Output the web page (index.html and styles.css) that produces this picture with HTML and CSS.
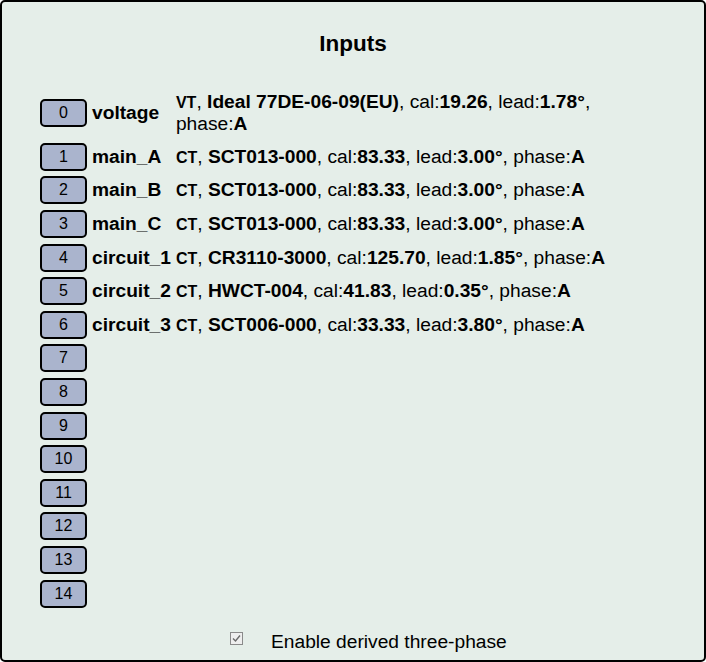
FILE: index.html
```html
<!DOCTYPE html>
<html>
<head>
<meta charset="utf-8">
<link rel="stylesheet" href="styles.css">
</head>
<body>
<div class="panel">
  <div class="title">Inputs</div>
  <div class="inputs">
    <button class="chan">0</button><div class="name">voltage</div><div class="info"><span class="kind">VT</span>, <b>Ideal 77DE-06-09(EU)</b>, cal:<b>19.26</b>, lead:<b>1.78°</b>, phase:<b>A</b></div>
    <button class="chan">1</button><div class="name">main_A</div><div class="info"><span class="kind">CT</span>, <b>SCT013-000</b>, cal:<b>83.33</b>, lead:<b>3.00°</b>, phase:<b>A</b></div>
    <button class="chan">2</button><div class="name">main_B</div><div class="info"><span class="kind">CT</span>, <b>SCT013-000</b>, cal:<b>83.33</b>, lead:<b>3.00°</b>, phase:<b>A</b></div>
    <button class="chan">3</button><div class="name">main_C</div><div class="info"><span class="kind">CT</span>, <b>SCT013-000</b>, cal:<b>83.33</b>, lead:<b>3.00°</b>, phase:<b>A</b></div>
    <button class="chan">4</button><div class="name">circuit_1</div><div class="info"><span class="kind">CT</span>, <b>CR3110-3000</b>, cal:<b>125.70</b>, lead:<b>1.85°</b>, phase:<b>A</b></div>
    <button class="chan">5</button><div class="name">circuit_2</div><div class="info"><span class="kind">CT</span>, <b>HWCT-004</b>, cal:<b>41.83</b>, lead:<b>0.35°</b>, phase:<b>A</b></div>
    <button class="chan">6</button><div class="name">circuit_3</div><div class="info"><span class="kind">CT</span>, <b>SCT006-000</b>, cal:<b>33.33</b>, lead:<b>3.80°</b>, phase:<b>A</b></div>
    <button class="chan">7</button><div class="name"></div><div class="info"></div>
    <button class="chan">8</button><div class="name"></div><div class="info"></div>
    <button class="chan">9</button><div class="name"></div><div class="info"></div>
    <button class="chan">10</button><div class="name"></div><div class="info"></div>
    <button class="chan">11</button><div class="name"></div><div class="info"></div>
    <button class="chan">12</button><div class="name"></div><div class="info"></div>
    <button class="chan">13</button><div class="name"></div><div class="info"></div>
    <button class="chan">14</button><div class="name"></div><div class="info"></div>
  </div>
  <label class="derived"><span class="box"><svg width="13" height="13" viewBox="0 0 13 13"><rect x="0.5" y="0.5" width="12" height="12" fill="#eeeeee" stroke="#8a8a8a"/><path d="M3 6.5 L5.5 9 L10 3.5" fill="none" stroke="#6a6a6a" stroke-width="1.4"/></svg></span><span>Enable derived three-phase</span></label>
</div>
</body>
</html>
```
FILE: styles.css
```css
html, body {
  margin: 0;
  padding: 0;
  background: #ffffff;
}
body {
  font-family: "Liberation Sans", Arial, sans-serif;
  font-size: 19.2px;
  color: #000;
}
.panel {
  box-sizing: border-box;
  width: 706px;
  height: 662px;
  border: 2px solid #000;
  border-radius: 5px;
  background: #e5eee9;
  overflow: hidden;
}
.title {
  margin-top: 29px;
  text-align: center;
  font-size: 22.5px;
  font-weight: bold;
  line-height: 26px;
}
.inputs {
  margin: 29px 0 0 38px;
  width: 600px;
  display: grid;
  grid-template-columns: 47px max-content 1fr;
  grid-auto-rows: minmax(33.6px, auto);
  column-gap: 5px;
  align-items: center;
}
.chan {
  box-sizing: border-box;
  width: 47px;
  height: 28px;
  margin: 0;
  padding: 0;
  border: 2px solid #000;
  border-radius: 5px;
  background: #aab4cd;
  font-family: "Liberation Sans", Arial, sans-serif;
  font-size: 16px;
  color: #000;
  text-align: center;
}
.name {
  font-weight: bold;
  line-height: 22px;
}
.info {
  line-height: 22px;
  padding: 5px 0;
}
.kind {
  font-size: 16px;
  font-weight: bold;
  line-height: 16px;
}
.derived {
  display: flex;
  align-items: flex-start;
  margin: 21px 0 0 228px;
  line-height: 22px;
}
.box {
  display: block;
  width: 13px;
  height: 13px;
  margin: 1px 28px 0 0;
}
.box svg {
  display: block;
}
```
